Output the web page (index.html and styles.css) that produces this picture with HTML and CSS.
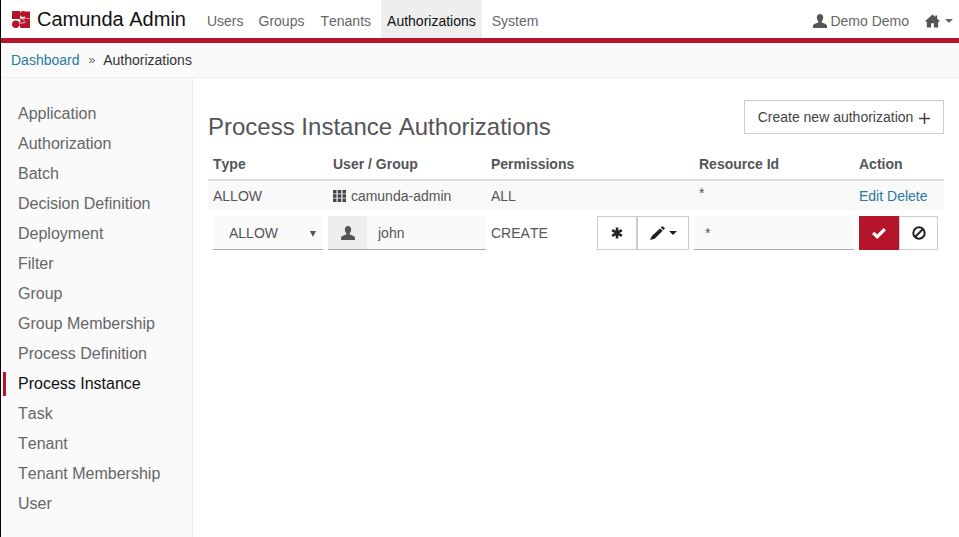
FILE: index.html
```html
<!DOCTYPE html>
<html lang="en">
<head>
    <meta charset="UTF-8">
    <title>Camunda Admin</title>
    <link rel="stylesheet" href="styles.css">
</head>
<body>

    <svg class="defs" width="0" height="0">
        <symbol id="i-user" viewBox="0 0 14 14">
            <path d="M7 0C5 0 3.800 1.500 3.800 3.600c0 1.500.6 2.900 1.500 3.700v1.100C3.300 9.100 0 10 0 11.800V14h14v-2.200c0-1.800-3.300-2.700-5.300-3.400V7.300c.9-.8 1.500-2.200 1.500-3.700C10.200 1.500 9 0 7 0z"/>
        </symbol>
        <symbol id="i-caret" viewBox="0 0 8 4">
            <path d="M0 0h8L4 4z"/>
        </symbol>
    </svg>

    <header class="topbar">
        <a class="brand">
            <svg class="logo" viewBox="0 0 18 17">
                <path d="M0 0h8v8H0z" fill="#b5152b"/>
                <circle cx="11" cy="3" r="3" fill="#b5152b"/>
                <path d="M13 .5h5V7h-5z" fill="#b5152b"/>
                <circle cx="3.800" cy="13.200" r="3.800" fill="#b5152b"/>
                <path d="M8 7.500h10V17H8.500l-1-3.500L8.500 10z" fill="#b5152b"/>
                <path d="M9 6.500l3.500 3.500M8.500 12.500l5-1.500" stroke="#fff" stroke-width=".8" fill="none"/>
            </svg>
            Camunda Admin
        </a>
        <nav class="mainnav">
            <a>Users</a>
            <a>Groups</a>
            <a>Tenants</a>
            <a class="current">Authorizations</a>
            <a>System</a>
        </nav>
        <div class="usernav">
            <a class="username"><svg class="icon"><use href="#i-user"/></svg> Demo Demo</a>
            <a class="homelink">
                <svg class="icon-home" viewBox="0 0 16 14"><path d="M8 0l3 2.700V1h2v3.500L16 7.300 14 8v6H9.500V9.500h-3V14H2V8L0 7.300z"/></svg>
                <svg class="caret"><use href="#i-caret"/></svg>
            </a>
        </div>
    </header>

    <div class="crumbs">
        <a>Dashboard</a>
        <span class="sep">»</span>
        <span>Authorizations</span>
    </div>

    <div class="page">
        <ul class="sidebar">
            <li>Application</li>
            <li>Authorization</li>
            <li>Batch</li>
            <li>Decision Definition</li>
            <li>Deployment</li>
            <li>Filter</li>
            <li>Group</li>
            <li>Group Membership</li>
            <li>Process Definition</li>
            <li class="active">Process Instance</li>
            <li>Task</li>
            <li>Tenant</li>
            <li>Tenant Membership</li>
            <li>User</li>
        </ul>

        <main class="content">
            <div class="titlerow">
                <h1>Process Instance Authorizations</h1>
                <button class="btn-create">Create new authorization
                    <svg class="plus" viewBox="0 0 11 11"><path d="M5.500 0v11M0 5.500h11" stroke="#444" stroke-width="1.500" fill="none"/></svg>
                </button>
            </div>

            <table class="authtable">
                <colgroup>
                    <col class="c-type"><col class="c-user"><col class="c-perm"><col class="c-res"><col class="c-act">
                </colgroup>
                <thead>
                    <tr>
                        <th>Type</th>
                        <th>User / Group</th>
                        <th>Permissions</th>
                        <th>Resource Id</th>
                        <th>Action</th>
                    </tr>
                </thead>
                <tbody>
                    <tr class="striped">
                        <td>ALLOW</td>
                        <td>
                            <svg class="icon-th" viewBox="0 0 13 12"><path d="M0 0h3.500v3.500H0zM4.700 0h3.600v3.500H4.700zM9.500 0H13v3.500H9.500zM0 4.300h3.500v3.500H0zM4.700 4.300h3.600v3.500H4.700zM9.500 4.300H13v3.500H9.500zM0 8.500h3.500V12H0zM4.700 8.500h3.600V12H4.700zM9.500 8.500H13V12H9.500z"/></svg>
                            camunda-admin
                        </td>
                        <td>ALL</td>
                        <td class="star">*</td>
                        <td><a class="link">Edit</a> <a class="link">Delete</a></td>
                    </tr>
                    <tr class="editrow">
                        <td>
                            <div class="selectwrap">
                                <select class="typeselect"><option>ALLOW</option></select>
                            </div>
                        </td>
                        <td class="nopad">
                            <div class="inputgroup">
                                <span class="addon"><svg class="icon"><use href="#i-user"/></svg></span>
                                <input class="field" type="text" value="john">
                            </div>
                        </td>
                        <td>
                            <div class="permcell">
                                <span>CREATE</span>
                                <div class="btngroup">
                                    <button class="btn btn-all">
                                        <svg viewBox="0 0 12 12" class="icon-star"><path d="M6 .5v11M1.200 3.200l9.600 5.600M10.800 3.200l-9.600 5.600" stroke="#222" stroke-width="2.600" fill="none"/></svg>
                                    </button>
                                    <button class="btn btn-pick">
                                        <svg viewBox="0 0 15 14" class="icon-pencil"><path d="M12.300 0L15 2.300 13.500 4 10.800 1.700zM10 2.500l2.700 2.300-8 8L0 14l1.800-4z"/></svg>
                                        <svg class="caret dark"><use href="#i-caret"/></svg>
                                    </button>
                                </div>
                            </div>
                        </td>
                        <td class="nopad"><input class="field resfield" type="text" value="*"></td>
                        <td>
                            <div class="btngroup">
                                <button class="btn btn-ok">
                                    <svg viewBox="0 0 14 11" class="icon-check"><path d="M0 6l2.300-2.300 2.900 2.800L11.700 0 14 2.300 5.200 11z" fill="#fff"/></svg>
                                </button>
                                <button class="btn btn-cancel">
                                    <svg viewBox="0 0 14 14" class="icon-ban"><circle cx="7" cy="7" r="5.700" fill="none" stroke="#222" stroke-width="2"/><path d="M3 11l8-8" stroke="#222" stroke-width="2"/></svg>
                                </button>
                            </div>
                        </td>
                    </tr>
                </tbody>
            </table>
        </main>
    </div>

</body>
</html>
```

FILE: styles.css
```css
*
{
    box-sizing: border-box;
}

html, body
{
    height: 100%;
}

body
{
    margin: 0;
    border-left: 1px solid #000;
    display: flex;
    flex-direction: column;
    overflow: hidden;
    background: #fff;
    color: #555;
    font-family: "Liberation Sans", Arial, sans-serif;
    font-size: 14px;
    font-kerning: none;
    line-height: 20px;
}

.defs
{
    position: absolute;
}

.topbar
{
    flex: none;
    height: 43px;
    display: flex;
    border-bottom: 5px solid #b5152b;
}

.brand
{
    display: flex;
    align-items: center;
    gap: 7px;
    margin-left: 11px;
    margin-right: 15px;
    color: #111;
    font-size: 20px;
}

.logo
{
    width: 18px;
    height: 17px;
}

.mainnav
{
    display: flex;
    gap: 4px;
}

.mainnav a
{
    display: flex;
    align-items: center;
    padding: 3px 6px 0;
    color: #666;
}

.mainnav a:first-child
{
    padding-right: 5px;
}

.mainnav a.current
{
    background: #eee;
    color: #111;
}

.usernav
{
    margin-left: auto;
    display: flex;
    align-items: center;
    gap: 16px;
    padding-top: 3px;
    padding-right: 6px;
    color: #666;
}

.username
{
    display: flex;
    align-items: center;
    gap: 3px;
}

.icon
{
    width: 14px;
    height: 14px;
    fill: #555;
}

.homelink
{
    display: flex;
    align-items: center;
    gap: 5px;
}

.icon-home
{
    width: 15px;
    height: 14px;
    fill: #555;
}

.caret
{
    width: 8px;
    height: 4px;
    fill: #666;
}

.caret.dark
{
    fill: #222;
}

.crumbs
{
    flex: none;
    height: 35px;
    display: flex;
    align-items: center;
    padding-left: 10px;
    background: #fafafa;
    border-bottom: 1px solid #eee;
    color: #333;
}

.crumbs a
{
    color: #2b7a9b;
}

.sep
{
    margin: 0 8px 0 9px;
    color: #666;
    font-size: 12px;
}

.page
{
    flex: 1;
    display: flex;
}

.sidebar
{
    flex: none;
    width: 192px;
    margin: 0;
    padding: 24px 0 0 2px;
    list-style: none;
    background: #fafafa;
    border-right: 1px solid #eee;
    font-size: 16px;
    color: #666;
}

.sidebar li
{
    height: 24px;
    margin-bottom: 6px;
    padding-left: 12px;
    border-left: 3px solid transparent;
    line-height: 24px;
}

.sidebar li.active
{
    border-left-color: #b5152b;
    color: #111;
}

.content
{
    flex: 1;
    padding: 22px 15px 0;
}

.titlerow
{
    display: flex;
    justify-content: space-between;
    align-items: flex-start;
}

h1
{
    margin: 13px 0 0;
    font-size: 24px;
    font-weight: normal;
    line-height: 28px;
    color: #555;
}

.btn-create
{
    width: 200px;
    height: 34px;
    display: flex;
    align-items: center;
    justify-content: center;
    gap: 6px;
    padding: 0;
    background: #fff;
    border: 1px solid #ccc;
    color: #444;
    font: inherit;
}

.plus
{
    width: 11px;
    height: 11px;
    margin-top: 3px;
}

.authtable
{
    width: 736px;
    margin-top: 8px;
    table-layout: fixed;
    border-collapse: collapse;
}

.c-type { width: 120px; }
.c-user { width: 158px; }
.c-perm { width: 208px; }
.c-res { width: 160px; }
.c-act { width: 90px; }

.authtable th
{
    height: 31px;
    padding: 0 5px;
    border-bottom: 2px solid #ddd;
    text-align: left;
    color: #555;
}

.authtable td
{
    padding: 0 5px;
}

.striped td
{
    height: 30px;
    background: #f9f9f9;
}

.striped .star
{
    vertical-align: top;
    padding-top: 2px;
}

.editrow td
{
    height: 46px;
    vertical-align: middle;
}

.authtable td.nopad
{
    padding: 0;
}

.icon-th
{
    width: 13px;
    height: 12px;
    margin-right: 1px;
    fill: #444;
    vertical-align: -1px;
}

.link
{
    color: #2b7a9b;
}

.selectwrap
{
    position: relative;
    width: 110px;
}

.selectwrap::after
{
    content: "";
    position: absolute;
    top: 15px;
    right: 7px;
    border-top: 6px solid #555;
    border-left: 3px solid transparent;
    border-right: 3px solid transparent;
}

.typeselect
{
    display: block;
    width: 110px;
    height: 34px;
    padding-left: 16px;
    appearance: none;
    background: #fafafa;
    border: none;
    border-bottom: 1px solid #aaa;
    border-radius: 0;
    color: #555;
    font: inherit;
}

.inputgroup
{
    display: flex;
}

.addon
{
    width: 39px;
    height: 34px;
    display: flex;
    align-items: center;
    justify-content: center;
    background: #eee;
    border-bottom: 1px solid #aaa;
}

.field
{
    flex: 1;
    min-width: 0;
    height: 34px;
    padding: 0 11px;
    background: #fafafa;
    border: none;
    border-bottom: 1px solid #aaa;
    border-radius: 0;
    color: #555;
    font: inherit;
}

.resfield
{
    display: block;
    width: 160px;
}

.permcell
{
    display: flex;
    align-items: center;
    justify-content: space-between;
}

.btngroup
{
    display: flex;
}

.btn
{
    height: 34px;
    display: flex;
    align-items: center;
    justify-content: center;
    gap: 4px;
    padding: 0;
    background: #fff;
    border: 1px solid #ccc;
}

.btn-all
{
    width: 40px;
}

.btn-pick
{
    width: 52px;
}

.btn-ok
{
    width: 40px;
    background: #b5152b;
    border-color: #b5152b;
}

.btn-cancel
{
    width: 39px;
}

.icon-star
{
    width: 12px;
    height: 12px;
}

.icon-pencil
{
    width: 15px;
    height: 14px;
    fill: #222;
}

.icon-check
{
    width: 14px;
    height: 11px;
}

.icon-ban
{
    width: 14px;
    height: 14px;
}
```
